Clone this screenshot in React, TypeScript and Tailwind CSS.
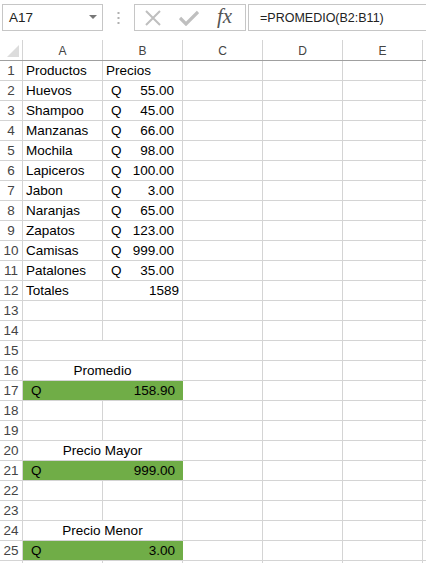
import React from "react";

type Row = {
  n: number;
  kind: "plain" | "merged" | "green";
  a?: string;
  b?: string;
  bq?: boolean;
  bRight?: boolean;
  label?: string;
  value?: string;
  hideNum?: boolean;
};

const rows: Row[] = [
  { n: 1, kind: "plain", a: "Productos", b: "Precios" },
  { n: 2, kind: "plain", a: "Huevos", b: "55.00", bq: true },
  { n: 3, kind: "plain", a: "Shampoo", b: "45.00", bq: true },
  { n: 4, kind: "plain", a: "Manzanas", b: "66.00", bq: true },
  { n: 5, kind: "plain", a: "Mochila", b: "98.00", bq: true },
  { n: 6, kind: "plain", a: "Lapiceros", b: "100.00", bq: true },
  { n: 7, kind: "plain", a: "Jabon", b: "3.00", bq: true },
  { n: 8, kind: "plain", a: "Naranjas", b: "65.00", bq: true },
  { n: 9, kind: "plain", a: "Zapatos", b: "123.00", bq: true },
  { n: 10, kind: "plain", a: "Camisas", b: "999.00", bq: true },
  { n: 11, kind: "plain", a: "Patalones", b: "35.00", bq: true },
  { n: 12, kind: "plain", a: "Totales", b: "1589", bRight: true },
  { n: 13, kind: "plain" },
  { n: 14, kind: "plain" },
  { n: 15, kind: "merged" },
  { n: 16, kind: "merged", label: "Promedio" },
  { n: 17, kind: "green", value: "158.90" },
  { n: 18, kind: "plain" },
  { n: 19, kind: "plain" },
  { n: 20, kind: "merged", label: "Precio Mayor" },
  { n: 21, kind: "green", value: "999.00" },
  { n: 22, kind: "plain" },
  { n: 23, kind: "plain" },
  { n: 24, kind: "merged", label: "Precio Menor" },
  { n: 25, kind: "green", value: "3.00" },
  { n: 26, kind: "plain", hideNum: true },
];

const cellText =
  "text-[13.5px] leading-[18px] pt-px text-black whitespace-nowrap overflow-hidden";

function EmptyCols() {
  return (
    <>
      <div className="w-[80px] shrink-0 border-r border-[#d4d4d4]" />
      <div className="w-[80px] shrink-0 border-r border-[#d4d4d4]" />
      <div className="w-[80px] shrink-0 border-r border-[#d4d4d4]" />
      <div className="flex-1" />
    </>
  );
}

function SheetRow({ r }: { r: Row }) {
  return (
    <div className="flex h-[20px] border-b border-[#d4d4d4]">
      <div className="w-[23px] shrink-0 border-r border-[#d4d4d4] text-center text-[13.5px] leading-[18px] pt-px text-[#444]">
        {r.hideNum ? "" : r.n}
      </div>
      {r.kind === "plain" && (
        <>
          <div className={`w-[80px] shrink-0 border-r border-[#d4d4d4] pl-[3px] ${cellText}`}>
            {r.a}
          </div>
          <div
            className={`w-[80px] shrink-0 border-r border-[#d4d4d4] ${cellText} ${
              r.bq ? "flex justify-between pl-[8px] pr-[8px]" : r.bRight ? "text-right pr-[3px]" : "pl-[3px]"
            }`}
          >
            {r.bq ? (
              <>
                <span>Q</span>
                <span>{r.b}</span>
              </>
            ) : (
              r.b
            )}
          </div>
        </>
      )}
      {r.kind === "merged" && (
        <div className={`w-[160px] shrink-0 border-r border-[#d4d4d4] text-center ${cellText}`}>
          {r.label}
        </div>
      )}
      {r.kind === "green" && (
        <div
          className={`w-[160px] shrink-0 bg-[#70ad47] flex justify-between pl-[8px] pr-[8px] ${cellText}`}
        >
          <span>Q</span>
          <span>{r.value}</span>
        </div>
      )}
      <EmptyCols />
    </div>
  );
}

export default function App() {
  return (
    <div
      className="w-[426px] h-[563px] overflow-hidden bg-white"
      style={{ fontFamily: '"Liberation Sans", Arial, sans-serif' }}
    >
      {/* Toolbar */}
      <div className="h-[40px] flex items-start pt-[4px]">
        <div className="ml-[2px] w-[101px] h-[27px] border border-[#c6c6c6] flex items-center justify-between pl-[6px] pr-[4px]">
          <span className="text-[13.5px] text-[#222] leading-none pt-[1px]">A17</span>
          <svg width="8" height="5" viewBox="0 0 8 5" className="mr-[1px]">
            <path d="M0 0 L8 0 L4 4 Z" fill="#777" />
          </svg>
        </div>
        <div className="w-[31px] h-[27px] flex items-center justify-center">
          <svg width="3" height="12" viewBox="0 0 3 12">
            <rect x="0.5" y="0" width="2" height="2" fill="#b0b0b0" />
            <rect x="0.5" y="5" width="2" height="2" fill="#b0b0b0" />
            <rect x="0.5" y="10" width="2" height="2" fill="#b0b0b0" />
          </svg>
        </div>
        <div className="w-[112px] h-[27px] border border-[#c6c6c6] flex items-center">
          <svg width="18" height="18" viewBox="0 0 18 18" className="ml-[9px]">
            <path d="M2 2 L16 16 M16 2 L2 16" stroke="#bfbfbf" strokeWidth="2" />
          </svg>
          <svg width="20" height="16" viewBox="0 0 20 16" className="ml-[17px]">
            <path d="M1 8 L7 14 L19 2" stroke="#bfbfbf" strokeWidth="3.2" fill="none" />
          </svg>
          <span
            className="ml-[18px] text-[21px] italic text-[#555] leading-none -mt-[2px]"
            style={{ fontFamily: '"Liberation Serif", "DejaVu Serif", serif' }}
          >
            fx
          </span>
        </div>
        <div className="ml-[2px] flex-1 h-[27px] border border-r-0 border-[#c6c6c6] flex items-center pl-[11px]">
          <span className="text-[12.5px] text-[#222] leading-none pt-[1px]">=PROMEDIO(B2:B11)</span>
        </div>
      </div>

      {/* Column headers */}
      <div className="flex h-[21px] border-b border-[#a0a0a0] text-[12px] text-[#444] leading-[17px] pt-[3px]">
        <div className="w-[23px] shrink-0 border-r border-[#d4d4d4] -mt-[3px] relative">
          <svg width="14" height="14" viewBox="0 0 14 14" className="absolute left-[6px] top-[4px]">
            <path d="M13 1 L13 13 L1 13 Z" fill="#dcdcdc" />
          </svg>
        </div>
        {["A", "B", "C", "D", "E"].map((c) => (
          <div key={c} className="w-[80px] shrink-0 border-r border-[#d4d4d4] text-center -mt-[3px] pt-[3px]">
            {c}
          </div>
        ))}
        <div className="flex-1" />
      </div>

      {rows.map((r) => (
        <SheetRow key={r.n} r={r} />
      ))}
    </div>
  );
}
